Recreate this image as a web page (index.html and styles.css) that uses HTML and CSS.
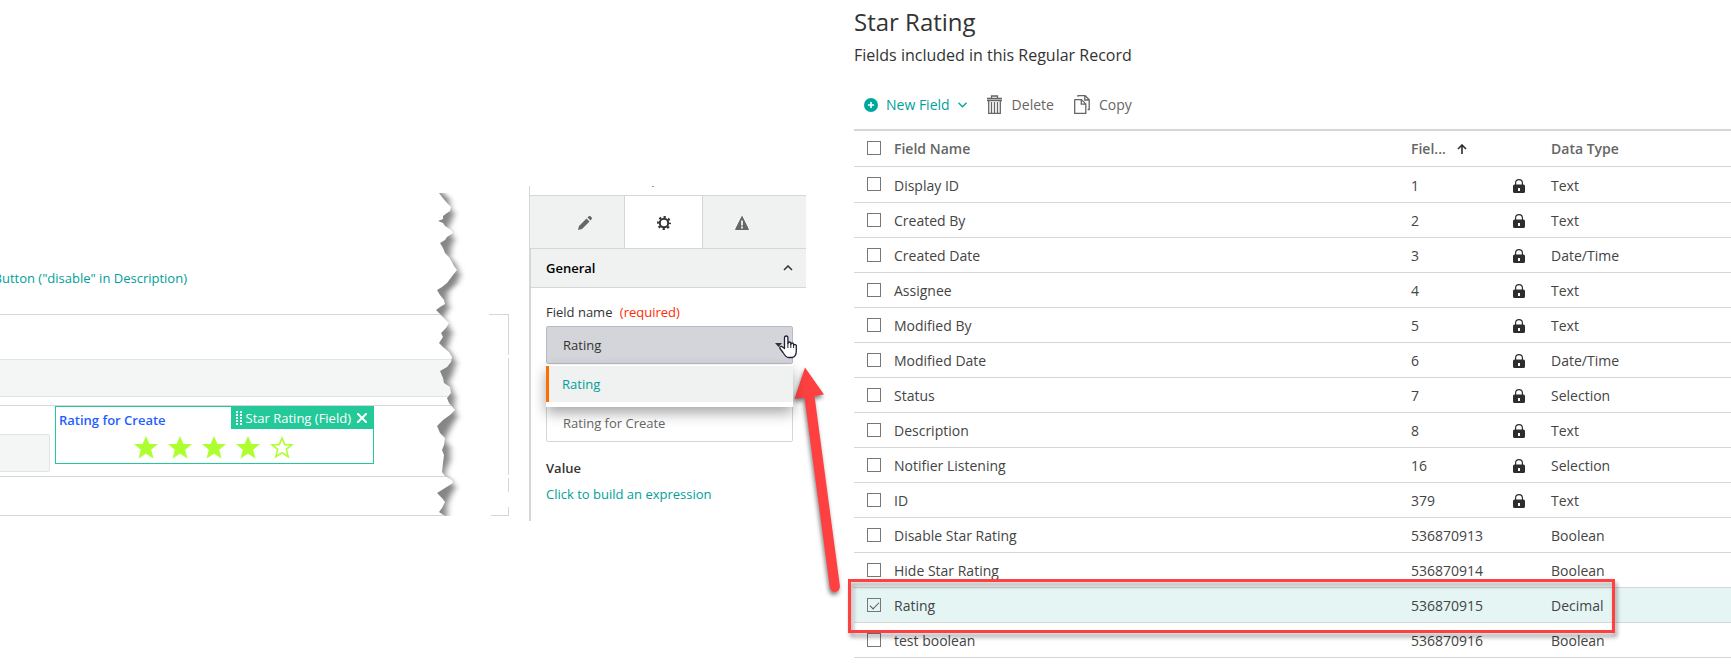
FILE: index.html
```html
<!DOCTYPE html>
<html lang="en">
<head>
<meta charset="utf-8">
<title>Star Rating</title>
<link rel="stylesheet" href="styles.css">
</head>
<body>
<svg width="0" height="0" class="defs" aria-hidden="true">
  <symbol id="star" viewBox="0 0 24 23"><path d="M12 0l3.400 8H24l-6.800 5.700L19.500 22.500 12 17.700 4.500 22.500l2.300-8.800L0 8h8.600z"/></symbol>
  <symbol id="lock" viewBox="0 0 12 14"><path d="M2.600 6V4a3.400 3.400 0 0 1 6.800 0v2" fill="none" stroke="#2d2d2d" stroke-width="1.200"/><path fill-rule="evenodd" d="M1.500 5.500h9Q12 5.500 12 7v5.500Q12 14 10.500 14h-9Q0 14 0 12.500V7Q0 5.500 1.500 5.500zM5 9v3h2V9z" fill="#2d2d2d"/></symbol>
</svg>
<main class="page">
  <section class="canvas">
    <div class="rule-link"><a href="#">Button ("disable" in Description)</a></div>
    <div class="row row-a"><div class="wide-field"></div></div>
    <div class="row row-b">
      <div class="small-field"></div>
      <div class="widget">
        <div class="widget-head">
          <span class="widget-label">Rating for Create</span>
          <div class="tag">
            <svg width="6" height="14" viewBox="0 0 6 14" fill="none" stroke="#fff" stroke-width="2" stroke-dasharray="2 1"><path d="M1 0v14M5 0v14"/></svg>
            <span>Star Rating (Field)</span>
            <button type="button" aria-label="Remove"><svg width="10" height="10" viewBox="0 0 10 10" stroke="#fff" stroke-width="2"><path d="M0 0l10 10M10 0L0 10"/></svg></button>
          </div>
        </div>
        <div class="stars">
          <svg><use href="#star"/></svg><svg><use href="#star"/></svg><svg><use href="#star"/></svg><svg><use href="#star"/></svg>
          <svg viewBox="0 0 24 23"><path fill-rule="evenodd" d="M12 0l3.400 8H24l-6.800 5.700L19.500 22.500 12 17.700 4.500 22.500l2.300-8.800L0 8h8.600zM12 4.200L9.800 9.600H4.200L8.500 13.100 7 19 12 15.800 17 19 15.500 13.100 19.800 9.600H14.200z"/></svg>
        </div>
      </div>
    </div>
    <div class="row row-c"></div>
    <svg class="tear" width="80" height="332" viewBox="0 0 80 332">
      <defs>
        <clipPath id="edge"><path d="M9 8l3 4 5 6 4 4-1 4-3 2-4 3v3l-5 2 5 2 2 3 6 4 2 3-6 4-2 3-5 3 3 5 2 5 4 4 3 5 2 4 3 4-4 5-3 4-3 4-5 4-5 3 3 5 4 5 1 4-5 3-4 3 4 4 3 3 6 6-3 5-5 5 2 4-4 6 4 4 6 5 3 5-1 5-4 5-7 4 3 7 1 5 6 4 1 6-4 5 2 5 6 7-5 5-7 5-6 6 3 7 5 5-1 7-2 5 2 5-1 8-1 9 3 4 7 4 1 3-8 5-8 5 5 5 3 4-3 6-3 4 6 4H80V8z"/></clipPath>
        <filter id="soft" x="-50%" y="-5%" width="200%" height="110%"><feGaussianBlur stdDeviation="3 1"/></filter>
      </defs>
      <g clip-path="url(#edge)">
        <path d="M0 0h80v332H0z" fill="#fff"/>
        <path filter="url(#soft)" fill="#868686" d="M0 6L11 6 19 14 20 22 24 29 21 37 18 43 21 48 24 55 21 63 20 72 26 80 30 90 27 98 18 107 17 115 19 123 14 132 18 140 22 148 19 157 17 163 22 170 26 178 23 188 19 197 22 205 25 212 24 222 27 232 21 242 17 250 15 255 20 263 20 275 16 285 15 290 21 295 25 303 20 312 17 320 17 332H0z"/>
      </g>
      <path d="M59 129.500h20M78.500 129v41M78.500 173v117M78.500 293v14M78.500 322v9M61 330.500h18" stroke="#d6d6d6" fill="none"/>
    </svg>
  </section>

  <section class="panel">
    <div class="panel-top"></div>
    <div class="tabs">
      <button type="button" class="tab" aria-label="Edit"><svg width="14" height="14" viewBox="0 0 14 14" fill="#666"><path d="M0 14l1-4 7.500-7.500 3 3L4 13zM9.500 1.500L11 0q.8-.4 1.500.3L13.700 1.500q.5.700 0 1.500L12.500 4.500z"/></svg></button>
      <button type="button" class="tab active" aria-label="Settings"><svg width="14" height="14" viewBox="0 0 14 14" fill="none" stroke="#333"><circle cx="7" cy="7" r="4.200" stroke-width="2"/><circle cx="7" cy="7" r="6" stroke-width="2" stroke-dasharray="2.300 2.412" stroke-dashoffset="1.150"/></svg></button>
      <button type="button" class="tab" aria-label="Warnings"><svg width="14" height="14" viewBox="0 0 14 14"><path d="M7 .5L13.500 13.500H.5z" fill="#666" stroke="#666" stroke-linejoin="round"/><path d="M7 4.500v5M7 10.500v2" stroke="#f0f2f1" stroke-width="1.800"/></svg></button>
    </div>
    <h2 class="group">General <svg width="10" height="6" viewBox="0 0 10 6" fill="none" stroke="#333" stroke-width="1.500"><path d="M1 5l4-4 4 4"/></svg></h2>
    <div class="form">
      <label for="field-name">Field name <span class="required">(required)</span></label>
      <div class="select">
        <select id="field-name"><option>Rating</option></select>
        <svg class="caret" width="7" height="4" viewBox="0 0 7 4"><path d="M0 0h7L3.500 4z" fill="#333"/></svg>
        <ul class="menu"><li>Rating</li></ul>
      </div>
      <input class="name-input" type="text" value="Rating for Create" aria-label="Name" readonly>
      <h3>Value</h3>
      <a href="#">Click to build an expression</a>
    </div>
  </section>

  <section class="records">
    <h1>Star Rating</h1>
    <p class="sub">Fields included in this Regular Record</p>
    <div class="toolbar">
      <button type="button" class="new"><svg width="14" height="14" viewBox="0 0 14 14"><circle cx="7" cy="7" r="7" fill="#00a79d"/><path d="M7 4v6M4 7h6" stroke="#fff" stroke-width="1.600"/></svg>New Field<svg width="9" height="6" viewBox="0 0 9 6" fill="none" stroke="#00a79d" stroke-width="1.400"><path d="M.5.8l4 4 4-4"/></svg></button>
      <button type="button" class="del"><svg width="15" height="19" viewBox="0 0 15 19" fill="none" stroke="#666" stroke-width="1.300"><path d="M0 3.500h15M0 5.500h15M4.500 3V1h6v2M1.700 6v12.300h11.600V6M4.500 7v11M7.500 7v11M10.500 7v11"/></svg>Delete</button>
      <button type="button" class="copy"><svg width="16" height="19" viewBox="0 0 16 19" fill="none" stroke="#666" stroke-width="1.300"><path d="M1 4.600h6.500l4.300 4.300v9.400H.7V5zM7.300 5v4.200h4.500M4 1.700V.7h7.200l4 4v9.800h-1.500M10.800 1v4h4.200"/></svg>Copy</button>
    </div>
    <div class="table-wrap">
    <table>
      <colgroup><col class="c-check"><col><col class="c-id"><col class="c-lock"><col class="c-type"></colgroup>
      <thead><tr><th><input type="checkbox" aria-label="Select all"></th><th>Field Name</th><th><span class="sort">Fiel... <svg width="10" height="10" viewBox="0 0 10 10" fill="none" stroke="#2d2d2d" stroke-width="1.600"><path d="M5 10V1M1 5l4-4 4 4"/></svg></span></th><th></th><th>Data Type</th></tr></thead>
      <tbody>
        <tr><td><input type="checkbox" aria-label="Display ID"></td><td>Display ID</td><td>1</td><td><svg class="lock"><use href="#lock"/></svg></td><td>Text</td></tr>
        <tr><td><input type="checkbox" aria-label="Created By"></td><td>Created By</td><td>2</td><td><svg class="lock"><use href="#lock"/></svg></td><td>Text</td></tr>
        <tr><td><input type="checkbox" aria-label="Created Date"></td><td>Created Date</td><td>3</td><td><svg class="lock"><use href="#lock"/></svg></td><td>Date/Time</td></tr>
        <tr><td><input type="checkbox" aria-label="Assignee"></td><td>Assignee</td><td>4</td><td><svg class="lock"><use href="#lock"/></svg></td><td>Text</td></tr>
        <tr><td><input type="checkbox" aria-label="Modified By"></td><td>Modified By</td><td>5</td><td><svg class="lock"><use href="#lock"/></svg></td><td>Text</td></tr>
        <tr><td><input type="checkbox" aria-label="Modified Date"></td><td>Modified Date</td><td>6</td><td><svg class="lock"><use href="#lock"/></svg></td><td>Date/Time</td></tr>
        <tr><td><input type="checkbox" aria-label="Status"></td><td>Status</td><td>7</td><td><svg class="lock"><use href="#lock"/></svg></td><td>Selection</td></tr>
        <tr><td><input type="checkbox" aria-label="Description"></td><td>Description</td><td>8</td><td><svg class="lock"><use href="#lock"/></svg></td><td>Text</td></tr>
        <tr><td><input type="checkbox" aria-label="Notifier Listening"></td><td>Notifier Listening</td><td>16</td><td><svg class="lock"><use href="#lock"/></svg></td><td>Selection</td></tr>
        <tr><td><input type="checkbox" aria-label="ID"></td><td>ID</td><td>379</td><td><svg class="lock"><use href="#lock"/></svg></td><td>Text</td></tr>
        <tr><td><input type="checkbox" aria-label="Disable Star Rating"></td><td>Disable Star Rating</td><td>536870913</td><td></td><td>Boolean</td></tr>
        <tr><td><input type="checkbox" aria-label="Hide Star Rating"></td><td>Hide Star Rating</td><td>536870914</td><td></td><td>Boolean</td></tr>
        <tr class="selected"><td><input type="checkbox" aria-label="Rating" checked></td><td>Rating</td><td>536870915</td><td></td><td>Decimal</td></tr>
        <tr><td><input type="checkbox" aria-label="test boolean"></td><td>test boolean</td><td>536870916</td><td></td><td>Boolean</td></tr>
      </tbody>
    </table>
    <div class="callout"></div>
    </div>
  </section>

  <svg class="pointer-arrow" width="60" height="240" viewBox="0 0 60 240"><path d="M15 7.500L34 34.500 24.500 36 49.900 226Q50 231 45.500 232 40.500 232 39.800 227L14.500 37.500 4.500 39z"/></svg>
  <svg class="cursor" width="18" height="24" viewBox="0 0 18 24"><path d="M5.500 13.500V3q0-2 1.700-2t1.700 2v5.500q0-1.500 1.400-1.500t1.500 1.500v1q0-1.500 1.300-1.500t1.500 1.500v1q0-1.200 1.200-1.200T17.300 10.500v5.500q0 5.500-4 6.500H9.500Q7 22.500 4 17.500l-3-4q-.6-1.500.5-2t2 .5z" fill="#fff" stroke="#223" stroke-width="1.300" stroke-linejoin="round"/><path d="M8.900 8v5M11.800 9v4M14.600 10v3" stroke="#223" fill="none"/></svg>
</main>
</body>
</html>
```
FILE: styles.css
```css
* { box-sizing: border-box; }
body { margin: 0; background: #fff; color: #333; font: 13px/20px "Open Sans", "Noto Sans", sans-serif; }
a { color: #00a09a; text-decoration: none; }
button { padding: 0; border: 0; background: none; font: inherit; color: inherit; }
svg { display: block; flex: none; }
.defs { position: absolute; }
.page { position: relative; display: grid; grid-template-columns: 529px 277px minmax(0, 1fr); align-items: start; overflow: hidden; }

.canvas { position: relative; padding-top: 268px; }
.rule-link { display: flex; justify-content: flex-end; width: 187px; height: 46px; white-space: nowrap; }
.row { width: 465px; border-top: 1px solid #d6d6d6; }
.row-a { padding: 44px 0 8px; }
.wide-field { height: 38px; background: #f4f6f5; border: solid #e2e4e3; border-width: 1px 0; }
.row-b { display: flex; height: 71px; }
.small-field { width: 50px; height: 38px; margin: 28px 5px 0 0; background: #f4f6f5; border: 1px solid #e2e4e3; border-left: 0; border-radius: 0 2px 2px 0; }
.row-c { height: 40px; border-bottom: 1px solid #d6d6d6; }
.widget { width: 319px; height: 58px; border: 1px solid #23c999; }
.widget-head { display: flex; justify-content: space-between; height: 22px; }
.widget-label { padding: 3px; color: #1f5fff; font-weight: 600; }
.tag { display: flex; align-items: center; gap: 4px; padding: 0 6px 0 5px; background: #23c999; color: #fff; font-weight: 500; }
.tag button { margin-left: 2px; }
.stars { display: flex; gap: 10px; padding: 7px 0 0 78px; fill: #adff2f; }
.stars svg { width: 24px; height: 23px; }
.tear { position: absolute; left: 430px; top: 185px; }

.panel { margin-top: 186px; border-left: 1px solid #d6d6d6; height: 335px; }
.panel-top { height: 9px; background: linear-gradient(#999, #999) 122px 0 / 2px 1px no-repeat; }
.tabs { display: flex; height: 54px; background: #f0f2f1; border: solid #d6d6d6; border-width: 1px 0; }
.tab { display: flex; align-items: center; justify-content: center; width: 78px; padding-top: 2px; }
.tab:first-child { width: 94px; padding-left: 16px; }
.tab.active { width: 79px; background: #fff; border: solid #d6d6d6; border-width: 0 1px; }
.group { display: flex; align-items: center; justify-content: space-between; height: 39px; margin: 0; padding: 0 13px 0 15px; background: #f0f2f1; border-bottom: 1px solid #d6d6d6; border-left: 1px solid #d6d6d6; color: #000; font-size: 13px; font-weight: 600; }
.form { display: flex; flex-direction: column; height: 233px; padding: 14px 13px 0 15px; border-left: 1px solid #d6d6d6; }
.form label { font-weight: 500; margin-bottom: 4px; }
.required { color: #ff2a00; margin-left: 4px; }
.select { position: relative; height: 46px; z-index: 1; }
.select select { appearance: none; width: 100%; height: 38px; padding: 0 16px; background: #d4d5da; border: 1px solid #b9bac6; border-radius: 2px; font: inherit; color: #333; opacity: 1; }
.caret { position: absolute; right: 11px; top: 17px; }
.menu { position: absolute; left: 0; right: 0; top: 39px; margin: 0; padding: 1px 0 5px; background: #fff; list-style: none; box-shadow: 0 6px 14px rgba(0,0,0,.35); }
.menu li { height: 36px; padding: 8px 13px; background: #f0f2f1; border-left: 3px solid #ff6d00; color: #00a09a; }
.name-input { width: 100%; height: 70px; padding: 32px 16px 0; border: 1px solid #d6d6d6; border-radius: 2px; font: inherit; color: #666; }
.form h3 { margin: 16px 0 6px; font-size: 13px; line-height: 20px; font-weight: 600; }

.records { padding: 6px 0 0 48px; }
.records h1 { margin: 0; font-size: 24px; line-height: 32px; font-weight: 400; }
.sub { margin: 6px 0 0; font-size: 16px; line-height: 22px; }
.toolbar { display: flex; align-items: center; height: 63px; padding: 14px 10px 0; font-size: 14px; color: #666; }
.toolbar button { display: flex; align-items: center; }
.new { gap: 8px; color: #00a09a; }
.del { gap: 10px; margin-left: 20px; }
.copy { gap: 9px; margin-left: 20px; }
.table-wrap { position: relative; border-top: 2px solid #d6d6d6; }
table { width: 100%; table-layout: fixed; border-collapse: separate; border-spacing: 0; color: #444; font-size: 14px; }
.c-check { width: 40px; }
.c-id { width: 102px; }
.c-lock { width: 38px; }
.c-type { width: 180px; }
th, td { height: 35px; padding: 2px 0 0; border-bottom: 1px solid #d6d6d6; text-align: left; vertical-align: middle; white-space: nowrap; }
th { height: 36px; padding: 0; color: #666; font-weight: 600; }
tbody tr:first-child td { height: 36px; }
td:first-child, th:first-child { padding: 0 0 1px 13px; }
.sort { display: flex; align-items: center; gap: 11px; }
input[type="checkbox"] { appearance: none; display: block; width: 14px; height: 14px; margin: 0; border: 1px solid #777; background: #fff; }
input[type="checkbox"]:checked { background: transparent; }
input[type="checkbox"]:checked::before { content: ""; display: block; width: 8px; height: 4px; margin: 3px 2px; border: solid #555; border-width: 0 0 1px 1px; transform: rotate(-45deg); }
.lock { width: 12px; height: 14px; }
.selected td { background: #e5f5f4; }
.callout { position: absolute; left: -6px; right: 116px; top: 448px; height: 54px; border: 3px solid #ff4040; filter: drop-shadow(2px 4px 2px rgba(0,0,0,.4)); }
.pointer-arrow { position: absolute; left: 790px; top: 360px; fill: #ff4040; filter: drop-shadow(-1px 3px 2px rgba(0,0,0,.5)); }
.cursor { position: absolute; z-index: 2; left: 779px; top: 335px; }
```
